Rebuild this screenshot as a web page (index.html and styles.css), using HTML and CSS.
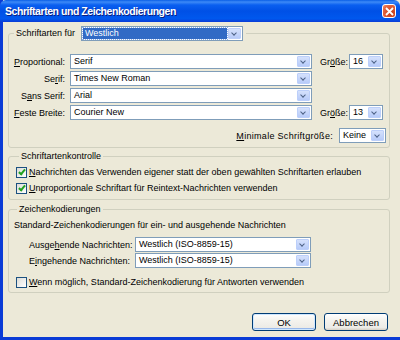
FILE: index.html
```html
<!DOCTYPE html>
<html>
	<head>
		<meta charset="UTF-8">
		<title>Schriftarten und Zeichenkodierungen</title>
		<link rel="stylesheet" href="styles.css">
	</head>
	<body>
		<div class="window">
			<div class="titlebar">
				<span class="title">Schriftarten und Zeichenkodierungen</span>
				<span class="close">
					<svg width="9" height="9" viewBox="0 0 9 9"><path d="M1 1L8 8M8 1L1 8" stroke="#fff" stroke-width="1.8"/></svg>
				</span>
			</div>
			<div class="content">
				<!-- Schriftarten -->
				<fieldset class="group fonts">
					<legend class="legend-combo">
						<span class="legend-label">Schriftarten für</span>
						<span class="combo focus w-legend"><span class="value"><span class="sel">Westlich</span></span><span class="arrow"></span></span>
					</legend>
					<div class="font-grid">
						<label class="lbl"><u>P</u>roportional:</label>
						<span class="combo"><span class="value">Serif</span><span class="arrow"></span></span>
						<label>Gr<u>ö</u>ße:</label>
						<span class="combo"><span class="value">16</span><span class="arrow"></span></span>

						<label class="lbl">Se<u>r</u>if:</label>
						<span class="combo"><span class="value">Times New Roman</span><span class="arrow"></span></span>
						<span></span><span></span>

						<label class="lbl">S<u>a</u>ns Serif:</label>
						<span class="combo"><span class="value">Arial</span><span class="arrow"></span></span>
						<span></span><span></span>

						<label class="lbl"><u>F</u>este Breite:</label>
						<span class="combo"><span class="value">Courier New</span><span class="arrow"></span></span>
						<label>Gr<u>ö</u>ße:</label>
						<span class="combo"><span class="value">13</span><span class="arrow"></span></span>
					</div>
					<div class="min-row">
						<label class="wide"><u>M</u>inimale Schriftgröße:</label>
						<span class="combo w-min"><span class="value">Keine</span><span class="arrow"></span></span>
					</div>
				</fieldset>

				<!-- Schriftartenkontrolle -->
				<fieldset class="group control">
					<legend>Schriftartenkontrolle</legend>
					<div class="check-row">
						<span class="check on"></span>
						<span><u>N</u>achrichten das Verwenden eigener statt der oben gewählten Schriftarten erlauben</span>
					</div>
					<div class="check-row">
						<span class="check on"></span>
						<span><u>U</u>nproportionale Schriftart für Reintext-Nachrichten verwenden</span>
					</div>
				</fieldset>

				<!-- Zeichenkodierungen -->
				<fieldset class="group encoding">
					<legend>Zeichenkodierungen</legend>
					<div class="enc-info">Standard-Zeichenkodierungen für ein- und ausgehende Nachrichten</div>
					<div class="enc-grid">
						<label>Ausge<u>h</u>ende Nachrichten:</label>
						<span class="combo"><span class="value">Westlich (ISO-8859-15)</span><span class="arrow"></span></span>
						<label>E<u>i</u>ngehende Nachrichten:</label>
						<span class="combo"><span class="value">Westlich (ISO-8859-15)</span><span class="arrow"></span></span>
					</div>
					<div class="check-row last">
						<span class="check"></span>
						<span><u>W</u>enn möglich, Standard-Zeichenkodierung für Antworten verwenden</span>
					</div>
				</fieldset>

				<div class="buttons">
					<button class="btn default">OK</button>
					<button class="btn">Abbrechen</button>
				</div>
			</div>
		</div>
	</body>
</html>
```

FILE: styles.css
```css
*{
	margin: 0;
	padding: 0;
	box-sizing: border-box;
}
html,body{
	width: 400px;
	height: 340px;
	overflow: hidden;
	background: #ece9d8;
}
body{
	font-family: "Liberation Sans", Arial, sans-serif;
	font-size: 9px;
	color: #000;
}
u{
	text-decoration: underline;
	text-underline-offset: 1px;
}
.window{
	width: 400px;
	height: 340px;
	background: #ece9d8;
	border-left: 3px solid #0a3bd6;
	border-bottom: 3px solid #0a3bd6;
	display: flex;
	flex-direction: column;
}
.titlebar{
	height: 22px;
	margin-left: -3px;
	padding: 0 3px 0 5px;
	display: flex;
	align-items: center;
	justify-content: space-between;
	background: linear-gradient(#0a5fe6 0, #3d8af7 2px, #0a5ff0 5px, #0050e6 50%, #0058ee 85%, #0a3bd6 100%);
	border-radius: 6px 6px 0 0;
}
.titlebar .title{
	color: #fff;
	font-weight: bold;
	font-size: 10.5px;
	letter-spacing: -0.45px;
	text-shadow: 1px 1px 0 #0a1f80;
}
.titlebar .close{
	width: 14px;
	height: 14px;
	margin-right: 1px;
	border: 1px solid #fff;
	border-radius: 3px;
	background: radial-gradient(circle at 70% 70%, #c23a16, #e5653f 70%, #f0926e);
	display: flex;
	align-items: center;
	justify-content: center;
}
.content{
	flex: 1;
	padding: 4px 10px 0 5px;
	display: flex;
	flex-direction: column;
}

/* Gruppen */
.group{
	border: 1px solid #d0d0bf;
	border-radius: 3px;
	min-width: 0;
}
.group legend{
	margin-left: 3px;
	padding: 0 2px;
	line-height: 12px;
}
.fonts{
	padding: 13px 0 4px 0;
}
.fonts legend.legend-combo{
	margin-left: 5px;
	padding: 0 3px 0 2px;
	display: flex;
	align-items: center;
	line-height: 15px;
}
.legend-label{
	width: 65px;
}
.control{
	margin-top: 2px;
	padding: 2px 0 3px 7px;
}
.encoding{
	margin-top: 3px;
	padding: 2px 0 2px 5px;
}

/* Combo */
.combo{
	display: flex;
	height: 15px;
	border: 1px solid #7f9db9;
	background: #fff;
}
.combo .value{
	flex: 1;
	padding-left: 3px;
	line-height: 13px;
	white-space: nowrap;
	overflow: hidden;
}
.combo .arrow{
	width: 13px;
	margin: 1px 1px 1px 0;
	border: 1px solid #bccffa;
	border-radius: 1px;
	background: linear-gradient(#d5e1fc, #b7cbf9);
	position: relative;
}
.combo .arrow::after{
	content: "";
	position: absolute;
	left: 3px;
	top: 2px;
	width: 3px;
	height: 3px;
	border-right: 1px solid #4d6185;
	border-bottom: 1px solid #4d6185;
	transform: rotate(45deg);
}
.combo.focus .value{
	padding: 1px;
}
.combo.focus .sel{
	display: block;
	height: 11px;
	line-height: 11px;
	padding-left: 2px;
	background: #316ac5;
	color: #fff;
	outline: 1px dotted #8fb0e6;
}
.w-legend{
	width: 162px;
}
.w-min{
	width: 47px;
}

/* Schriftarten-Raster */
.font-grid{
	display: grid;
	grid-template-columns: 56px 242px 27px 34px;
	grid-auto-rows: 15px;
	column-gap: 5px;
	row-gap: 2px;
	align-items: center;
}
.font-grid > :nth-child(4n+3){
	margin-left: 3px;
}
.font-grid .lbl{
	text-align: right;
	white-space: nowrap;
}
.min-row{
	margin-top: 8px;
	padding-right: 3px;
	display: flex;
	justify-content: flex-end;
	align-items: center;
	gap: 6px;
}
.min-row .wide{
	letter-spacing: 0.3px;
}

/* Checkboxen */
.check-row{
	height: 16px;
	display: flex;
	align-items: center;
	gap: 2px;
	white-space: nowrap;
}
.check{
	width: 11px;
	height: 11px;
	border: 1px solid #1c5180;
	background: linear-gradient(135deg, #dcdcd7, #fff);
	position: relative;
}
.check.on::after{
	content: "";
	position: absolute;
	left: 3px;
	top: 0px;
	width: 2px;
	height: 5px;
	border-right: 2px solid #21a121;
	border-bottom: 2px solid #21a121;
	transform: rotate(40deg);
}
.encoding .check-row{
	padding-left: 2px;
}
.encoding .check-row.last{
	margin-top: 6px;
}

/* Zeichenkodierungen */
.enc-info{
	line-height: 12px;
	padding-top: 2px;
}
.enc-grid{
	margin-top: 6px;
	padding-left: 15px;
	display: grid;
	grid-template-columns: 106px 176px;
	grid-auto-rows: 15px;
	row-gap: 1px;
	align-items: center;
}

/* Schaltflächen */
.buttons{
	margin-top: 20px;
	padding-right: 2px;
	display: flex;
	justify-content: flex-end;
	gap: 8px;
}
.btn{
	width: 64px;
	height: 18px;
	font-family: inherit;
	font-size: 9.5px;
	color: #000;
	border: 1px solid #003c74;
	border-radius: 3px;
	background: linear-gradient(#ffffff, #f4f3ee 40%, #ecebe6 85%, #d6d0c5);
}
.btn.default{
	box-shadow: inset 0 0 0 1px #cee7ff, inset 0 -1px 0 1px #98b8ea;
}
```
